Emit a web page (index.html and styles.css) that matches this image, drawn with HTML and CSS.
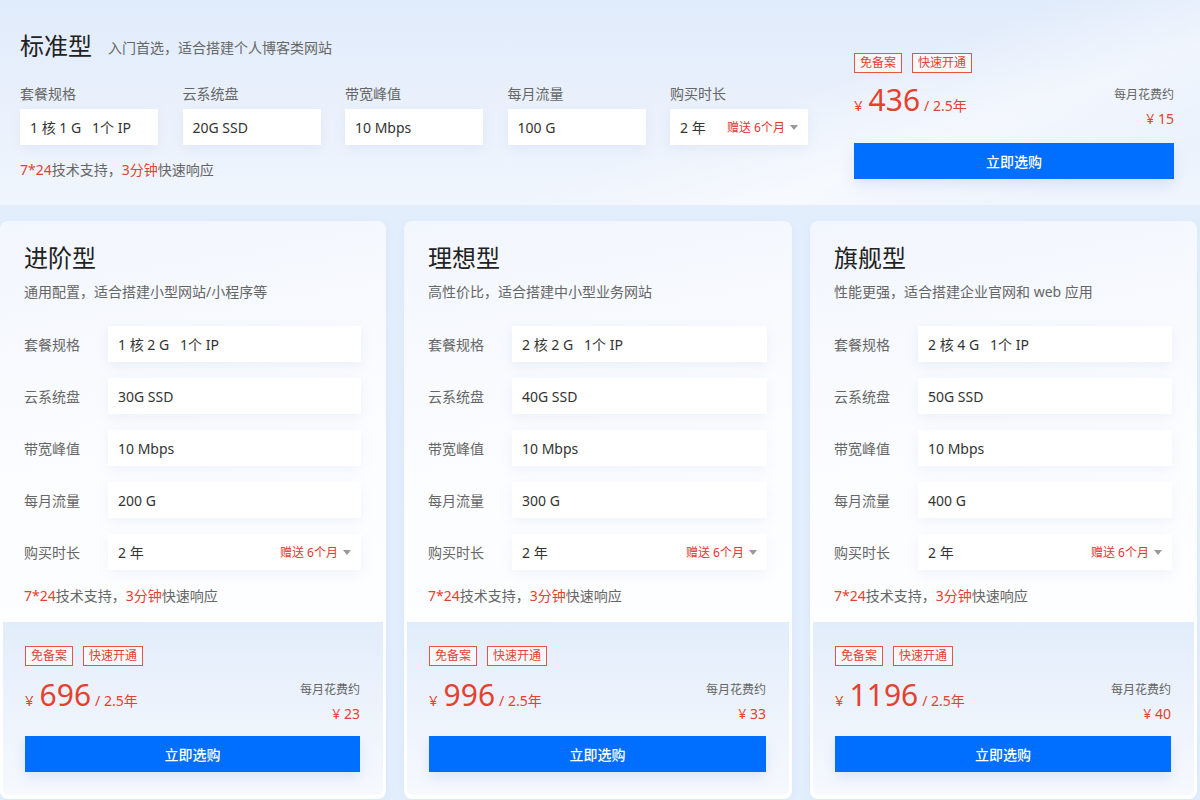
FILE: index.html
```html
<!DOCTYPE html>
<html lang="zh-CN">
<head>
<meta charset="utf-8">
<title>套餐</title>
<link rel="stylesheet" href="styles.css">
</head>
<body>
<section class="hero">
  <div class="hero-left">
    <div class="hero-head">
      <h1 class="title">标准型</h1>
      <span class="sub">入门首选，适合搭建个人博客类网站</span>
    </div>
    <div class="fields">
      <div class="field"><div class="flabel">套餐规格</div><div class="box">1 核 1 G&nbsp;&nbsp; 1个 IP</div></div>
      <div class="field"><div class="flabel">云系统盘</div><div class="box">20G SSD</div></div>
      <div class="field"><div class="flabel">带宽峰值</div><div class="box">10 Mbps</div></div>
      <div class="field"><div class="flabel">每月流量</div><div class="box">100 G</div></div>
      <div class="field"><div class="flabel">购买时长</div><div class="box select"><span>2 年</span><span class="gift">赠送 6个月<i class="caret"></i></span></div></div>
    </div>
    <p class="support"><em>7*24</em>技术支持，<em>3分钟</em>快速响应</p>
  </div>
  <div class="hero-right">
    <div class="tags"><span class="tag">免备案</span><span class="tag">快速开通</span></div>
    <div class="price-row">
      <div class="price"><span class="yen">¥</span><span class="num">436</span><span class="per">/ 2.5年</span></div>
      <div class="monthly"><div class="ml">每月花费约</div><div class="mv">¥ 15</div></div>
    </div>
    <button class="buy hero-buy">立即选购</button>
  </div>
</section>

<main class="cards">
  <article class="card">
    <div class="card-top">
      <h2 class="title">进阶型</h2>
      <p class="csub">通用配置，适合搭建小型网站/小程序等</p>
      <div class="rows">
        <div class="row"><span class="rlabel">套餐规格</span><div class="box">1 核 2 G&nbsp;&nbsp; 1个 IP</div></div>
        <div class="row"><span class="rlabel">云系统盘</span><div class="box">30G SSD</div></div>
        <div class="row"><span class="rlabel">带宽峰值</span><div class="box">10 Mbps</div></div>
        <div class="row"><span class="rlabel">每月流量</span><div class="box">200 G</div></div>
        <div class="row"><span class="rlabel">购买时长</span><div class="box select"><span>2 年</span><span class="gift">赠送 6个月<i class="caret"></i></span></div></div>
      </div>
      <p class="support"><em>7*24</em>技术支持，<em>3分钟</em>快速响应</p>
    </div>
    <div class="card-bottom">
      <div class="tags"><span class="tag">免备案</span><span class="tag">快速开通</span></div>
      <div class="price-row">
        <div class="price"><span class="yen">¥</span><span class="num">696</span><span class="per">/ 2.5年</span></div>
        <div class="monthly"><div class="ml">每月花费约</div><div class="mv">¥ 23</div></div>
      </div>
      <button class="buy">立即选购</button>
    </div>
  </article>

  <article class="card">
    <div class="card-top">
      <h2 class="title">理想型</h2>
      <p class="csub">高性价比，适合搭建中小型业务网站</p>
      <div class="rows">
        <div class="row"><span class="rlabel">套餐规格</span><div class="box">2 核 2 G&nbsp;&nbsp; 1个 IP</div></div>
        <div class="row"><span class="rlabel">云系统盘</span><div class="box">40G SSD</div></div>
        <div class="row"><span class="rlabel">带宽峰值</span><div class="box">10 Mbps</div></div>
        <div class="row"><span class="rlabel">每月流量</span><div class="box">300 G</div></div>
        <div class="row"><span class="rlabel">购买时长</span><div class="box select"><span>2 年</span><span class="gift">赠送 6个月<i class="caret"></i></span></div></div>
      </div>
      <p class="support"><em>7*24</em>技术支持，<em>3分钟</em>快速响应</p>
    </div>
    <div class="card-bottom">
      <div class="tags"><span class="tag">免备案</span><span class="tag">快速开通</span></div>
      <div class="price-row">
        <div class="price"><span class="yen">¥</span><span class="num">996</span><span class="per">/ 2.5年</span></div>
        <div class="monthly"><div class="ml">每月花费约</div><div class="mv">¥ 33</div></div>
      </div>
      <button class="buy">立即选购</button>
    </div>
  </article>

  <article class="card">
    <div class="card-top">
      <h2 class="title">旗舰型</h2>
      <p class="csub">性能更强，适合搭建企业官网和 web 应用</p>
      <div class="rows">
        <div class="row"><span class="rlabel">套餐规格</span><div class="box">2 核 4 G&nbsp;&nbsp; 1个 IP</div></div>
        <div class="row"><span class="rlabel">云系统盘</span><div class="box">50G SSD</div></div>
        <div class="row"><span class="rlabel">带宽峰值</span><div class="box">10 Mbps</div></div>
        <div class="row"><span class="rlabel">每月流量</span><div class="box">400 G</div></div>
        <div class="row"><span class="rlabel">购买时长</span><div class="box select"><span>2 年</span><span class="gift">赠送 6个月<i class="caret"></i></span></div></div>
      </div>
      <p class="support"><em>7*24</em>技术支持，<em>3分钟</em>快速响应</p>
    </div>
    <div class="card-bottom">
      <div class="tags"><span class="tag">免备案</span><span class="tag">快速开通</span></div>
      <div class="price-row">
        <div class="price"><span class="yen">¥</span><span class="num">1196</span><span class="per">/ 2.5年</span></div>
        <div class="monthly"><div class="ml">每月花费约</div><div class="mv">¥ 40</div></div>
      </div>
      <button class="buy">立即选购</button>
    </div>
  </article>
</main>
</body>
</html>
```

FILE: styles.css
```css
* { box-sizing: border-box; }
html, body { margin: 0; padding: 0; }
body {
  width: 1200px;
  height: 800px;
  overflow: hidden;
  background: #e2eefc;
  font-family: "Noto Sans", "Noto Sans CJK SC", sans-serif;
  color: #333;
}
h1, h2, p { margin: 0; font-weight: normal; }
em { font-style: normal; color: #e5412e; }

.hero {
  height: 205px;
  display: flex;
  justify-content: space-between;
  padding: 30px 26px 0 20px;
  background:
    linear-gradient(160deg, rgba(255,255,255,0) 60%, rgba(255,255,255,0.45) 75%, rgba(255,255,255,0) 90%),
    linear-gradient(180deg, #e0ebfb 0%, #eaf1fc 55%, #f0f5fd 100%);
}
.hero-left { width: 790px; }
.hero-head { display: flex; align-items: center; gap: 16px; height: 31px; }
.title { font-size: 24px; line-height: 30px; color: #222; }
.sub { font-size: 14px; color: #666; padding-top: 2px; }
.fields {
  margin-top: 24px;
  display: grid;
  grid-template-columns: repeat(5, 138px);
  column-gap: 24.5px;
}
.flabel { font-size: 14px; line-height: 18px; color: #666; margin-bottom: 6px; }
.box {
  height: 36px;
  background: #fff;
  padding: 0 10px;
  display: flex;
  align-items: center;
  font-size: 14px;
  color: #333;
  box-shadow: 0 4px 12px rgba(120,150,200,0.10);
}
.select { justify-content: space-between; }
.gift { color: #e5342e; font-size: 12px; display: flex; align-items: center; }
.caret {
  display: inline-block;
  width: 0; height: 0;
  margin-left: 5px;
  border-left: 4px solid transparent;
  border-right: 4px solid transparent;
  border-top: 5px solid #999;
}
.support { font-size: 14px; line-height: 18px; color: #666; margin-top: 16px; }

.hero-right { width: 320px; padding-top: 23px; }
.tags { display: flex; gap: 10px; }
.tag {
  font-size: 12px;
  line-height: 18px;
  height: 20px;
  padding: 0 5px;
  color: #e5412e;
  border: 1px solid #e5553f;
  background: rgba(255,255,255,0.6);
}
.price-row { display: flex; justify-content: space-between; align-items: flex-start; margin-top: 7px; }
.price { display: flex; align-items: baseline; color: #e5412e; padding-top: 2px; }
.yen { font-size: 15px; margin-right: 6px; }
.num { font-size: 30px; line-height: 36px; margin-right: 4px; }
.per { font-size: 14px; }
.monthly { text-align: right; padding-top: 6px; }
.ml { font-size: 12px; line-height: 18px; color: #666; }
.mv { font-size: 14px; line-height: 18px; color: #e5412e; margin-top: 6px; }
.buy {
  display: block;
  width: 100%;
  height: 36px;
  border: 0;
  background: #006eff;
  color: #fff;
  font-family: inherit;
  font-size: 14px;
  font-weight: 500;
  cursor: pointer;
  box-shadow: 0 6px 14px rgba(0,80,200,0.10);
}
.hero-buy { margin-top: 15px; }

.cards {
  display: grid;
  grid-template-columns: 386px 388px 387px;
  column-gap: 18px;
  padding: 16px 0 0 0;
}
.card {
  height: 578px;
  border-radius: 8px;
  background: linear-gradient(170deg, #f2f6fd 0%, #fcfdff 45%, #ffffff 100%);
  box-shadow: 0 2px 8px rgba(120,150,200,0.08);
  display: flex;
  flex-direction: column;
  overflow: hidden;
}
.card-top { padding: 22px 25px 17px 24px; }
.csub { font-size: 14px; line-height: 18px; color: #666; margin-top: 10px; }
.rows { margin-top: 25px; display: flex; flex-direction: column; gap: 16px; }
.row { display: flex; align-items: center; }
.rlabel { width: 84px; flex: none; font-size: 14px; color: #666; }
.row .box { flex: 1; }
.card .support { margin-top: 17px; }

.card-bottom {
  flex: 1;
  margin: 0 3px 4px 3px;
  padding: 24px 23px 0 22px;
  background: linear-gradient(180deg, #e2edfb 0%, #edf3fc 50%, #f6f9fe 100%);
  border-radius: 0 0 6px 6px;
}
.card-bottom .price-row { margin-top: 9px; }
.card-bottom .buy { margin-top: 13px; }
```
